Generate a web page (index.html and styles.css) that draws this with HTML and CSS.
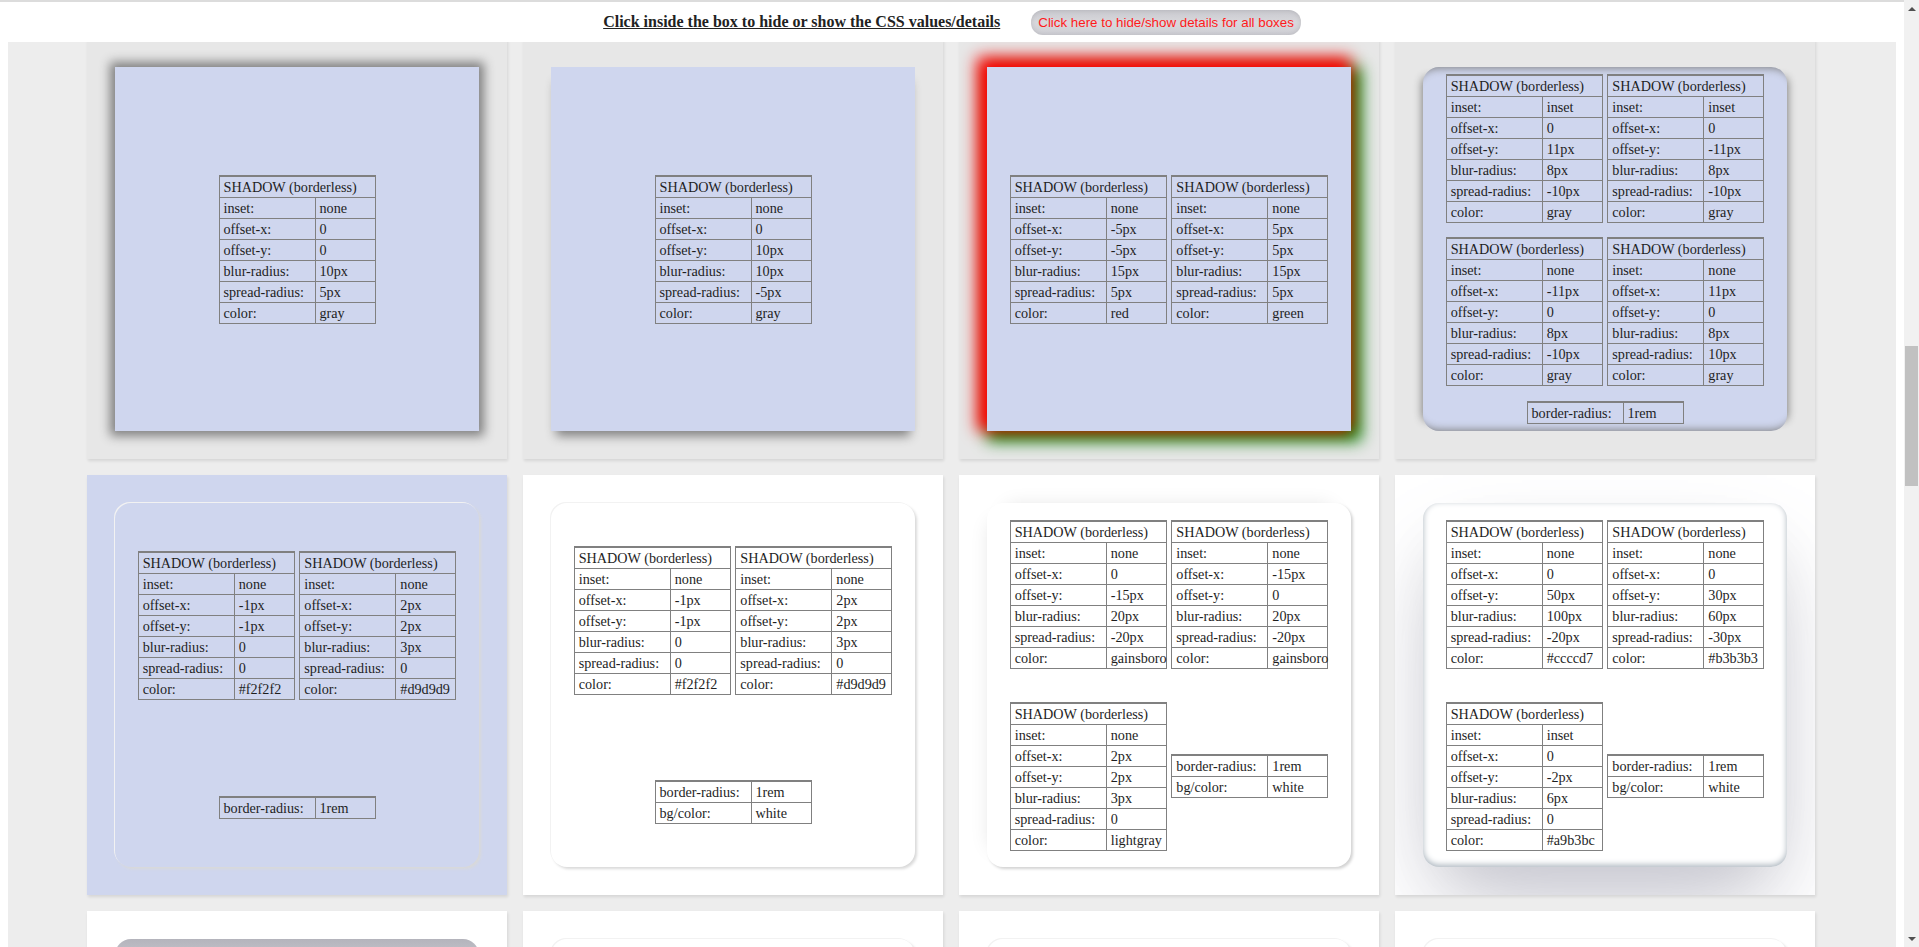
FILE: index.html
```html
<!DOCTYPE html>
<html lang="en">
<head>
<meta charset="utf-8">
<title>Box shadow examples</title>
<link rel="stylesheet" href="styles.css">
</head>
<body>
<header class="topbar">
  <span class="hint">Click inside the box to hide or show the CSS values/details</span>
  <button class="toggle-all" type="button">Click here to hide/show details for all boxes</button>
</header>

<div class="vscroll" aria-hidden="true">
  <span class="vs-btn vs-up"></span>
  <span class="vs-thumb"></span>
  <span class="vs-btn vs-down"></span>
</div>

<main class="page">
  <div class="grid">

    <!-- Row 1 -->
    <div class="card card-grey">
      <div class="box sh-r1c1">
        <div class="row">
          <table class="spec"><colgroup><col class="ck"><col></colgroup>
            <tr><td colspan="2">SHADOW (borderless)</td></tr>
            <tr><td>inset:</td><td>none</td></tr>
            <tr><td>offset-x:</td><td>0</td></tr>
            <tr><td>offset-y:</td><td>0</td></tr>
            <tr><td>blur-radius:</td><td>10px</td></tr>
            <tr><td>spread-radius:</td><td>5px</td></tr>
            <tr><td>color:</td><td>gray</td></tr>
          </table>
        </div>
      </div>
    </div>

    <div class="card card-grey">
      <div class="box sh-r1c2">
        <div class="row">
          <table class="spec"><colgroup><col class="ck"><col></colgroup>
            <tr><td colspan="2">SHADOW (borderless)</td></tr>
            <tr><td>inset:</td><td>none</td></tr>
            <tr><td>offset-x:</td><td>0</td></tr>
            <tr><td>offset-y:</td><td>10px</td></tr>
            <tr><td>blur-radius:</td><td>10px</td></tr>
            <tr><td>spread-radius:</td><td>-5px</td></tr>
            <tr><td>color:</td><td>gray</td></tr>
          </table>
        </div>
      </div>
    </div>

    <div class="card card-grey">
      <div class="box sh-r1c3">
        <div class="row">
          <table class="spec"><colgroup><col class="ck"><col></colgroup>
            <tr><td colspan="2">SHADOW (borderless)</td></tr>
            <tr><td>inset:</td><td>none</td></tr>
            <tr><td>offset-x:</td><td>-5px</td></tr>
            <tr><td>offset-y:</td><td>-5px</td></tr>
            <tr><td>blur-radius:</td><td>15px</td></tr>
            <tr><td>spread-radius:</td><td>5px</td></tr>
            <tr><td>color:</td><td>red</td></tr>
          </table>
          <table class="spec"><colgroup><col class="ck"><col></colgroup>
            <tr><td colspan="2">SHADOW (borderless)</td></tr>
            <tr><td>inset:</td><td>none</td></tr>
            <tr><td>offset-x:</td><td>5px</td></tr>
            <tr><td>offset-y:</td><td>5px</td></tr>
            <tr><td>blur-radius:</td><td>15px</td></tr>
            <tr><td>spread-radius:</td><td>5px</td></tr>
            <tr><td>color:</td><td>green</td></tr>
          </table>
        </div>
      </div>
    </div>

    <div class="card card-grey">
      <div class="box rounded sh-r1c4">
        <div class="row">
          <table class="spec"><colgroup><col class="ck"><col></colgroup>
            <tr><td colspan="2">SHADOW (borderless)</td></tr>
            <tr><td>inset:</td><td>inset</td></tr>
            <tr><td>offset-x:</td><td>0</td></tr>
            <tr><td>offset-y:</td><td>11px</td></tr>
            <tr><td>blur-radius:</td><td>8px</td></tr>
            <tr><td>spread-radius:</td><td>-10px</td></tr>
            <tr><td>color:</td><td>gray</td></tr>
          </table>
          <table class="spec"><colgroup><col class="ck"><col></colgroup>
            <tr><td colspan="2">SHADOW (borderless)</td></tr>
            <tr><td>inset:</td><td>inset</td></tr>
            <tr><td>offset-x:</td><td>0</td></tr>
            <tr><td>offset-y:</td><td>-11px</td></tr>
            <tr><td>blur-radius:</td><td>8px</td></tr>
            <tr><td>spread-radius:</td><td>-10px</td></tr>
            <tr><td>color:</td><td>gray</td></tr>
          </table>
        </div>
        <div class="row">
          <table class="spec"><colgroup><col class="ck"><col></colgroup>
            <tr><td colspan="2">SHADOW (borderless)</td></tr>
            <tr><td>inset:</td><td>none</td></tr>
            <tr><td>offset-x:</td><td>-11px</td></tr>
            <tr><td>offset-y:</td><td>0</td></tr>
            <tr><td>blur-radius:</td><td>8px</td></tr>
            <tr><td>spread-radius:</td><td>-10px</td></tr>
            <tr><td>color:</td><td>gray</td></tr>
          </table>
          <table class="spec"><colgroup><col class="ck"><col></colgroup>
            <tr><td colspan="2">SHADOW (borderless)</td></tr>
            <tr><td>inset:</td><td>none</td></tr>
            <tr><td>offset-x:</td><td>11px</td></tr>
            <tr><td>offset-y:</td><td>0</td></tr>
            <tr><td>blur-radius:</td><td>8px</td></tr>
            <tr><td>spread-radius:</td><td>10px</td></tr>
            <tr><td>color:</td><td>gray</td></tr>
          </table>
        </div>
        <div class="row">
          <table class="spec"><colgroup><col class="ck"><col></colgroup>
            <tr><td>border-radius:</td><td>1rem</td></tr>
          </table>
        </div>
      </div>
    </div>

    <!-- Row 2 -->
    <div class="card card-lav">
      <div class="box rounded box-lav sh-soft">
        <div class="row">
          <table class="spec"><colgroup><col class="ck"><col></colgroup>
            <tr><td colspan="2">SHADOW (borderless)</td></tr>
            <tr><td>inset:</td><td>none</td></tr>
            <tr><td>offset-x:</td><td>-1px</td></tr>
            <tr><td>offset-y:</td><td>-1px</td></tr>
            <tr><td>blur-radius:</td><td>0</td></tr>
            <tr><td>spread-radius:</td><td>0</td></tr>
            <tr><td>color:</td><td>#f2f2f2</td></tr>
          </table>
          <table class="spec"><colgroup><col class="ck"><col></colgroup>
            <tr><td colspan="2">SHADOW (borderless)</td></tr>
            <tr><td>inset:</td><td>none</td></tr>
            <tr><td>offset-x:</td><td>2px</td></tr>
            <tr><td>offset-y:</td><td>2px</td></tr>
            <tr><td>blur-radius:</td><td>3px</td></tr>
            <tr><td>spread-radius:</td><td>0</td></tr>
            <tr><td>color:</td><td>#d9d9d9</td></tr>
          </table>
        </div>
        <div class="row">
          <table class="spec"><colgroup><col class="ck"><col></colgroup>
            <tr><td>border-radius:</td><td>1rem</td></tr>
          </table>
        </div>
      </div>
    </div>

    <div class="card card-white">
      <div class="box rounded box-white sh-soft">
        <div class="row">
          <table class="spec"><colgroup><col class="ck"><col></colgroup>
            <tr><td colspan="2">SHADOW (borderless)</td></tr>
            <tr><td>inset:</td><td>none</td></tr>
            <tr><td>offset-x:</td><td>-1px</td></tr>
            <tr><td>offset-y:</td><td>-1px</td></tr>
            <tr><td>blur-radius:</td><td>0</td></tr>
            <tr><td>spread-radius:</td><td>0</td></tr>
            <tr><td>color:</td><td>#f2f2f2</td></tr>
          </table>
          <table class="spec"><colgroup><col class="ck"><col></colgroup>
            <tr><td colspan="2">SHADOW (borderless)</td></tr>
            <tr><td>inset:</td><td>none</td></tr>
            <tr><td>offset-x:</td><td>2px</td></tr>
            <tr><td>offset-y:</td><td>2px</td></tr>
            <tr><td>blur-radius:</td><td>3px</td></tr>
            <tr><td>spread-radius:</td><td>0</td></tr>
            <tr><td>color:</td><td>#d9d9d9</td></tr>
          </table>
        </div>
        <div class="row">
          <table class="spec"><colgroup><col class="ck"><col></colgroup>
            <tr><td>border-radius:</td><td>1rem</td></tr>
            <tr><td>bg/color:</td><td>white</td></tr>
          </table>
        </div>
      </div>
    </div>

    <div class="card card-white">
      <div class="box rounded box-white sh-r2c3">
        <div class="row">
          <table class="spec"><colgroup><col class="ck"><col></colgroup>
            <tr><td colspan="2">SHADOW (borderless)</td></tr>
            <tr><td>inset:</td><td>none</td></tr>
            <tr><td>offset-x:</td><td>0</td></tr>
            <tr><td>offset-y:</td><td>-15px</td></tr>
            <tr><td>blur-radius:</td><td>20px</td></tr>
            <tr><td>spread-radius:</td><td>-20px</td></tr>
            <tr><td>color:</td><td>gainsboro</td></tr>
          </table>
          <table class="spec"><colgroup><col class="ck"><col></colgroup>
            <tr><td colspan="2">SHADOW (borderless)</td></tr>
            <tr><td>inset:</td><td>none</td></tr>
            <tr><td>offset-x:</td><td>-15px</td></tr>
            <tr><td>offset-y:</td><td>0</td></tr>
            <tr><td>blur-radius:</td><td>20px</td></tr>
            <tr><td>spread-radius:</td><td>-20px</td></tr>
            <tr><td>color:</td><td>gainsboro</td></tr>
          </table>
        </div>
        <div class="row">
          <table class="spec"><colgroup><col class="ck"><col></colgroup>
            <tr><td colspan="2">SHADOW (borderless)</td></tr>
            <tr><td>inset:</td><td>none</td></tr>
            <tr><td>offset-x:</td><td>2px</td></tr>
            <tr><td>offset-y:</td><td>2px</td></tr>
            <tr><td>blur-radius:</td><td>3px</td></tr>
            <tr><td>spread-radius:</td><td>0</td></tr>
            <tr><td>color:</td><td>lightgray</td></tr>
          </table>
          <table class="spec"><colgroup><col class="ck"><col></colgroup>
            <tr><td>border-radius:</td><td>1rem</td></tr>
            <tr><td>bg/color:</td><td>white</td></tr>
          </table>
        </div>
      </div>
    </div>

    <div class="card card-white">
      <div class="box rounded box-white sh-r2c4">
        <div class="row">
          <table class="spec"><colgroup><col class="ck"><col></colgroup>
            <tr><td colspan="2">SHADOW (borderless)</td></tr>
            <tr><td>inset:</td><td>none</td></tr>
            <tr><td>offset-x:</td><td>0</td></tr>
            <tr><td>offset-y:</td><td>50px</td></tr>
            <tr><td>blur-radius:</td><td>100px</td></tr>
            <tr><td>spread-radius:</td><td>-20px</td></tr>
            <tr><td>color:</td><td>#ccccd7</td></tr>
          </table>
          <table class="spec"><colgroup><col class="ck"><col></colgroup>
            <tr><td colspan="2">SHADOW (borderless)</td></tr>
            <tr><td>inset:</td><td>none</td></tr>
            <tr><td>offset-x:</td><td>0</td></tr>
            <tr><td>offset-y:</td><td>30px</td></tr>
            <tr><td>blur-radius:</td><td>60px</td></tr>
            <tr><td>spread-radius:</td><td>-30px</td></tr>
            <tr><td>color:</td><td>#b3b3b3</td></tr>
          </table>
        </div>
        <div class="row">
          <table class="spec"><colgroup><col class="ck"><col></colgroup>
            <tr><td colspan="2">SHADOW (borderless)</td></tr>
            <tr><td>inset:</td><td>inset</td></tr>
            <tr><td>offset-x:</td><td>0</td></tr>
            <tr><td>offset-y:</td><td>-2px</td></tr>
            <tr><td>blur-radius:</td><td>6px</td></tr>
            <tr><td>spread-radius:</td><td>0</td></tr>
            <tr><td>color:</td><td>#a9b3bc</td></tr>
          </table>
          <table class="spec"><colgroup><col class="ck"><col></colgroup>
            <tr><td>border-radius:</td><td>1rem</td></tr>
            <tr><td>bg/color:</td><td>white</td></tr>
          </table>
        </div>
      </div>
    </div>

    <!-- Row 3 (only its top edge is in view) -->
    <div class="card card-white">
      <div class="box rounded box-steel"></div>
    </div>
    <div class="card card-white">
      <div class="box rounded box-white sh-soft"></div>
    </div>
    <div class="card card-white">
      <div class="box rounded box-white sh-soft"></div>
    </div>
    <div class="card card-white">
      <div class="box rounded box-white sh-soft"></div>
    </div>

  </div>
</main>
</body>
</html>
```

FILE: styles.css
```css
html {
  background: #ffffff;
}

body {
  margin: 8px;
  background: #ffffff;
  font-family: "Liberation Serif", "Times New Roman", serif;
  color: #1e1e1e;
}

/* ---------- fixed top bar ---------- */
.topbar {
  position: fixed;
  top: 0;
  left: 0;
  width: 1904px;
  height: 40px;
  border-top: 2px solid #dcdcdc;
  background: #ffffff;
  display: flex;
  align-items: center;
  justify-content: center;
  gap: 31px;
  z-index: 10;
}

.hint {
  font-family: "Liberation Serif", "Times New Roman", serif;
  font-weight: bold;
  font-size: 16px;
  color: #222222;
  text-decoration: underline;
  cursor: pointer;
}

.toggle-all {
  font-family: "Liberation Sans", Arial, sans-serif;
  font-size: 13.333px;
  color: #ff1a1a;
  height: 25px;
  padding: 0 7px;
  border: 0;
  border-radius: 12px;
  background: linear-gradient(to bottom, #c9c9cf, #d8d8dc 50%, #cfcfd5);
  box-shadow: inset 0 0 5px rgba(0, 0, 0, 0.12);
  cursor: pointer;
}

/* ---------- window scroll rail (overlay on the right edge) ---------- */
.vscroll {
  position: fixed;
  top: 0;
  right: 0;
  width: 15px;
  height: 100vh;
  background: #f1f1f1;
  display: flex;
  flex-direction: column;
  align-items: center;
  z-index: 20;
}

.vs-btn {
  width: 15px;
  height: 17px;
  display: flex;
  align-items: center;
  justify-content: center;
}

.vs-btn::before {
  content: "";
  width: 0;
  height: 0;
  border-left: 4px solid transparent;
  border-right: 4px solid transparent;
}

.vs-up::before { border-bottom: 4px solid #505050; }
.vs-down::before { border-top: 4px solid #505050; }

.vs-thumb {
  width: 13px;
  height: 140px;
  margin-top: 329px;
  background: #c1c1c1;
}

.vs-down { margin-top: auto; }

/* ---------- page & grid ---------- */
.page {
  display: block;
  width: 1888px;
  box-sizing: border-box;
  background: #ededed;
  padding: 31px 2px 16px 0;
}

.grid {
  display: grid;
  grid-template-columns: repeat(4, 420px);
  gap: 16px;
  justify-content: center;
}

.card {
  height: 420px;
  padding: 28px;
  box-sizing: border-box;
  overflow: hidden;
  box-shadow: 1px 2px 3px rgba(0, 0, 0, 0.10);
}

.card-grey { background: #e7e7e7; }
.card-lav { background: #cfd6ee; }
.card-white { background: #ffffff; }

.box {
  width: 364px;
  height: 364px;
  box-sizing: border-box;
  background: #cfd6ee;
  display: flex;
  flex-direction: column;
  justify-content: space-around;
  align-items: center;
}

.rounded { border-radius: 1rem; }
.box-lav { background: #cfd6ee; }
.box-white { background: #ffffff; }
.box-steel {
  background: linear-gradient(to bottom, #b4b4bc, #c6c6cd 6%, #d6d6dc 30%, #dcdce2);
}

.row {
  display: flex;
  align-items: center;
  gap: 4.6px;
}

/* ---------- the shadows being demonstrated ---------- */
.sh-r1c1 { box-shadow: 0 0 10px 5px gray; }
.sh-r1c2 { box-shadow: 0 10px 10px -5px gray; }
.sh-r1c3 { box-shadow: -5px -5px 15px 5px red, 5px 5px 15px 5px green; }
.sh-r1c4 {
  box-shadow:
    inset 0 11px 8px -10px gray,
    inset 0 -11px 8px -10px gray,
    -11px 0 8px -10px gray,
    11px 0 8px -10px gray;
}
.sh-soft { box-shadow: -1px -1px 0 #f2f2f2, 2px 2px 3px #d9d9d9; }
.sh-r2c3 {
  box-shadow:
    0 -15px 20px -20px gainsboro,
    -15px 0 20px -20px gainsboro,
    2px 2px 3px lightgray;
}
.sh-r2c4 {
  box-shadow:
    0 50px 100px -20px #ccccd7,
    0 30px 60px -30px #b3b3b3,
    inset 0 -2px 6px #a9b3bc;
}

/* ---------- value tables ---------- */
.spec {
  border-collapse: collapse;
  table-layout: fixed;
  width: 157px;
  font-family: "Liberation Serif", "Times New Roman", serif;
  font-size: 14.2px;
  line-height: 16px;
  color: #1e1e1e;
  border-top: 2px solid #808080;
}

.spec col.ck { width: 96px; }

.spec td {
  border: 1px solid #808080;
  padding: 2px 4px;
  white-space: nowrap;
  text-align: left;
}
```
